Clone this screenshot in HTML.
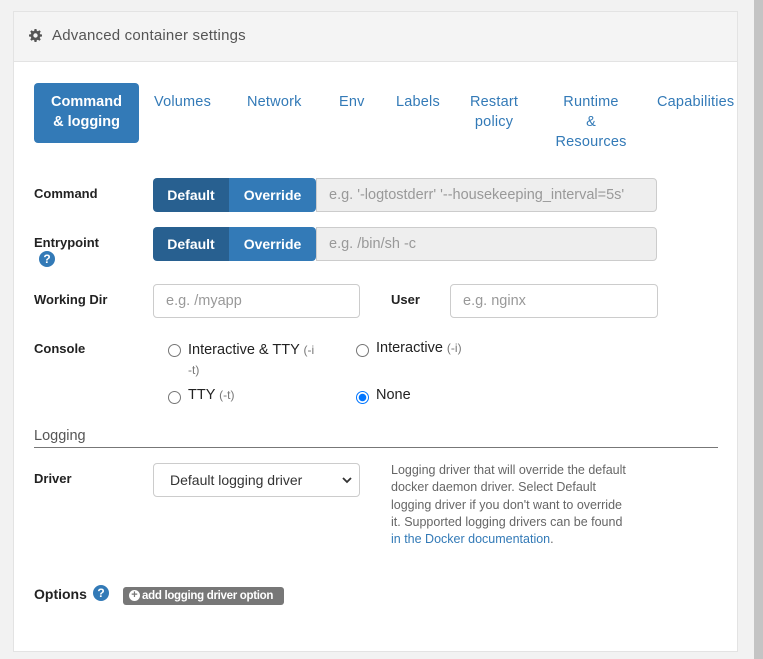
<!DOCTYPE html>
<html><head><meta charset="utf-8"><style>
*{box-sizing:border-box;margin:0;padding:0}
body{width:763px;height:659px;background:#f2f2f2;font-family:"Liberation Sans",sans-serif;position:relative;overflow:hidden;color:#333}
.a{position:absolute}
.panel{left:13px;top:11px;width:725px;height:641px;background:#fff;border:1px solid #e3e3e3}
.hdr{left:14px;top:12px;width:723px;height:50px;background:#f4f4f4;border-bottom:1px solid #e3e3e3}
.tab{color:#337ab7;font-size:14.5px;text-align:center;line-height:20px;letter-spacing:0.2px}
.lbl{font-size:13px;font-weight:bold;color:#222}
.btng{height:34px;display:flex;border-radius:4px;overflow:hidden}
.btng div{color:#fff;font-size:14px;font-weight:bold;line-height:34px;text-align:center}
.inp{height:34px;border:1px solid #ccc;border-radius:4px;font-size:14px;color:#999;line-height:32px;padding-left:12px;background:#fff;white-space:nowrap;overflow:hidden}
.rad{width:13px;height:13px;border:1px solid #767676;border-radius:50%}
.rt{font-size:14.5px;color:#222}
.rt small{font-size:12px;color:#777}
</style></head><body>
<div class="a" style="left:754px;top:0;width:9px;height:659px;background:#c4c4c4"></div>
<div class="a panel"></div>
<div class="a hdr"></div>
<svg class="a" style="left:29px;top:29px" width="13" height="13" viewBox="0 0 16 16"><path fill="#555" d="M6.8 0h2.4l.4 2.2 1.4.6 1.8-1.3 1.7 1.7-1.3 1.8.6 1.4 2.2.4v2.4l-2.2.4-.6 1.4 1.3 1.8-1.7 1.7-1.8-1.3-1.4.6-.4 2.2H6.8l-.4-2.2-1.4-.6-1.8 1.3-1.7-1.7 1.3-1.8-.6-1.4L0 9.2V6.8l2.2-.4.6-1.4-1.3-1.8 1.7-1.7 1.8 1.3 1.4-.6zM8 5.3A2.7 2.7 0 1 0 8 10.7 2.7 2.7 0 1 0 8 5.3z"/></svg>
<div class="a" style="left:52px;top:27px;font-size:15px;color:#555;letter-spacing:0.2px">Advanced container settings</div>

<div class="a" style="left:34px;top:83px;width:105px;height:60px;background:#337ab7;border-radius:4px;color:#fff;font-weight:bold;font-size:14.5px;text-align:center;line-height:20px;padding-top:9px">Command<br>&amp; logging</div>
<div class="a tab" style="left:154px;top:92px">Volumes</div>
<div class="a tab" style="left:247px;top:92px">Network</div>
<div class="a tab" style="left:339px;top:92px">Env</div>
<div class="a tab" style="left:396px;top:92px">Labels</div>
<div class="a tab" style="left:470px;top:92px">Restart<br>policy</div>
<div class="a tab" style="left:552px;top:92px;width:78px">Runtime<br>&amp;<br>Resources</div>
<div class="a tab" style="left:657px;top:92px">Capabilities</div>

<div class="a lbl" style="left:34px;top:186px">Command</div>
<div class="a btng" style="left:153px;top:178px"><div style="width:76px;background:#286090">Default</div><div style="width:87px;background:#337ab7">Override</div></div>
<div class="a inp" style="left:316px;top:178px;width:341px;background:#eee;border-radius:0 4px 4px 0;font-size:14.5px">e.g. '-logtostderr' '--housekeeping_interval=5s'</div>

<div class="a lbl" style="left:34px;top:235px">Entrypoint</div>
<div class="a" style="left:39px;top:251px;width:16px;height:16px;border-radius:50%;background:#337ab7;color:#fff;font-size:12px;font-weight:bold;text-align:center;line-height:16px">?</div>
<div class="a btng" style="left:153px;top:227px"><div style="width:76px;background:#286090">Default</div><div style="width:87px;background:#337ab7">Override</div></div>
<div class="a inp" style="left:316px;top:227px;width:341px;background:#eee;border-radius:0 4px 4px 0;font-size:14.5px">e.g. /bin/sh -c</div>

<div class="a lbl" style="left:34px;top:292px">Working Dir</div>
<div class="a inp" style="left:153px;top:284px;width:207px;font-size:14.5px">e.g. /myapp</div>
<div class="a lbl" style="left:391px;top:292px">User</div>
<div class="a inp" style="left:450px;top:284px;width:208px;font-size:14.5px">e.g. nginx</div>

<div class="a lbl" style="left:34px;top:341px">Console</div>
<div class="a rad" style="left:168px;top:344px"></div>
<div class="a rt" style="left:188px;top:340px;width:140px;line-height:20px">Interactive &amp; TTY <small>(-i<br>-t)</small></div>
<div class="a rad" style="left:356px;top:344px"></div>
<div class="a rt" style="left:376px;top:340px">Interactive <small>(-i)</small></div>
<div class="a rad" style="left:168px;top:391px"></div>
<div class="a rt" style="left:188px;top:387px">TTY <small>(-t)</small></div>
<div class="a rad" style="left:356px;top:391px;border:1px solid #0075ff;background:radial-gradient(circle,#0075ff 0 3.5px,#fff 4px)"></div>
<div class="a rt" style="left:376px;top:387px">None</div>

<div class="a" style="left:34px;top:428px;font-size:14.5px;color:#555">Logging</div>
<div class="a" style="left:34px;top:447px;width:684px;height:1px;background:#777"></div>

<div class="a lbl" style="left:34px;top:471px">Driver</div>
<div class="a" style="left:153px;top:463px;width:207px;height:34px;border:1px solid #ccc;border-radius:4px;font-size:14px;color:#333;line-height:32px;padding-left:16px">Default logging driver
<svg class="a" style="right:7px;top:12px" width="10" height="8" viewBox="0 0 10 8"><path d="M1 2l4 4 4-4" stroke="#333" stroke-width="1.8" fill="none"/></svg></div>
<div class="a" style="left:391px;top:462px;font-size:12.5px;color:#666;line-height:17.3px;white-space:nowrap">Logging driver that will override the default<br>docker daemon driver. Select Default<br>logging driver if you don't want to override<br>it. Supported logging drivers can be found<br><span style="color:#337ab7">in the Docker documentation</span>.</div>

<div class="a" style="left:34px;top:586px;font-size:14px;font-weight:bold;color:#222">Options</div>
<div class="a" style="left:93px;top:585px;width:16px;height:16px;border-radius:50%;background:#337ab7;color:#fff;font-size:12px;font-weight:bold;text-align:center;line-height:16px">?</div>
<div class="a" style="left:123px;top:587px;width:161px;height:18px;background:#777;border-radius:3px;color:#fff;font-size:11.5px;font-weight:bold;line-height:18px;padding-left:19px;letter-spacing:-0.3px">add logging driver option</div>
<div class="a" style="left:129px;top:590px;width:11px;height:11px;border-radius:50%;background:#fff;color:#777;font-size:11px;font-weight:bold;text-align:center;line-height:11px">+</div>
</body></html>
